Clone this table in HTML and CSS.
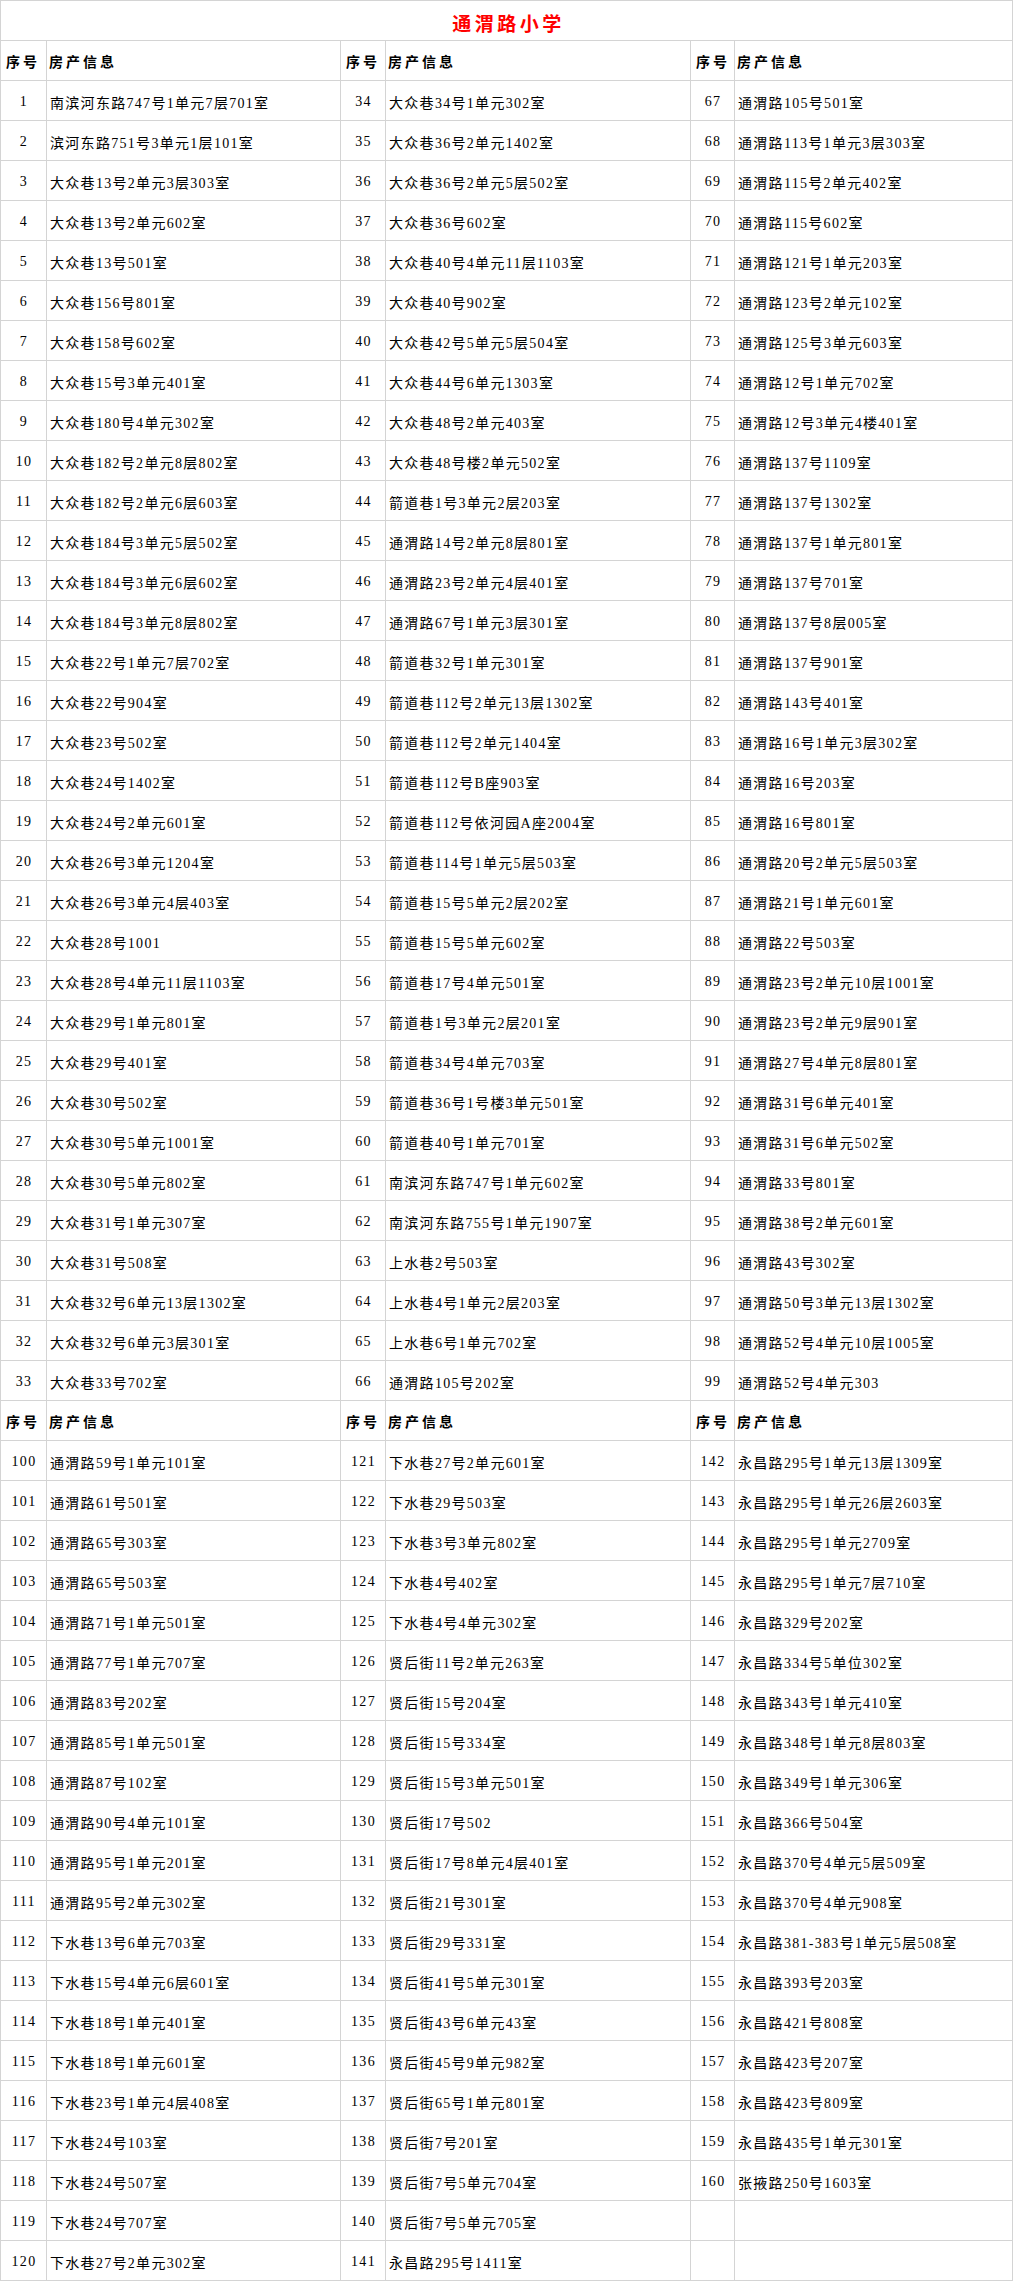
FILE: index.html
```html
<!DOCTYPE html>
<html lang="zh-CN">
<head>
<meta charset="utf-8">
<title>通渭路小学</title>
<link rel="stylesheet" href="styles.css">
</head>
<body>
<div class="sheet">
<div class="title">通渭路小学</div>
<div class="hn">序号</div><div class="ha">房产信息</div><div class="hn">序号</div><div class="ha">房产信息</div><div class="hn">序号</div><div class="ha">房产信息</div>
<div class="n">1</div><div class="a">南滨河东路747号1单元7层701室</div><div class="n">34</div><div class="a">大众巷34号1单元302室</div><div class="n">67</div><div class="a">通渭路105号501室</div>
<div class="n">2</div><div class="a">滨河东路751号3单元1层101室</div><div class="n">35</div><div class="a">大众巷36号2单元1402室</div><div class="n">68</div><div class="a">通渭路113号1单元3层303室</div>
<div class="n">3</div><div class="a">大众巷13号2单元3层303室</div><div class="n">36</div><div class="a">大众巷36号2单元5层502室</div><div class="n">69</div><div class="a">通渭路115号2单元402室</div>
<div class="n">4</div><div class="a">大众巷13号2单元602室</div><div class="n">37</div><div class="a">大众巷36号602室</div><div class="n">70</div><div class="a">通渭路115号602室</div>
<div class="n">5</div><div class="a">大众巷13号501室</div><div class="n">38</div><div class="a">大众巷40号4单元11层1103室</div><div class="n">71</div><div class="a">通渭路121号1单元203室</div>
<div class="n">6</div><div class="a">大众巷156号801室</div><div class="n">39</div><div class="a">大众巷40号902室</div><div class="n">72</div><div class="a">通渭路123号2单元102室</div>
<div class="n">7</div><div class="a">大众巷158号602室</div><div class="n">40</div><div class="a">大众巷42号5单元5层504室</div><div class="n">73</div><div class="a">通渭路125号3单元603室</div>
<div class="n">8</div><div class="a">大众巷15号3单元401室</div><div class="n">41</div><div class="a">大众巷44号6单元1303室</div><div class="n">74</div><div class="a">通渭路12号1单元702室</div>
<div class="n">9</div><div class="a">大众巷180号4单元302室</div><div class="n">42</div><div class="a">大众巷48号2单元403室</div><div class="n">75</div><div class="a">通渭路12号3单元4楼401室</div>
<div class="n">10</div><div class="a">大众巷182号2单元8层802室</div><div class="n">43</div><div class="a">大众巷48号楼2单元502室</div><div class="n">76</div><div class="a">通渭路137号1109室</div>
<div class="n">11</div><div class="a">大众巷182号2单元6层603室</div><div class="n">44</div><div class="a">箭道巷1号3单元2层203室</div><div class="n">77</div><div class="a">通渭路137号1302室</div>
<div class="n">12</div><div class="a">大众巷184号3单元5层502室</div><div class="n">45</div><div class="a">通渭路14号2单元8层801室</div><div class="n">78</div><div class="a">通渭路137号1单元801室</div>
<div class="n">13</div><div class="a">大众巷184号3单元6层602室</div><div class="n">46</div><div class="a">通渭路23号2单元4层401室</div><div class="n">79</div><div class="a">通渭路137号701室</div>
<div class="n">14</div><div class="a">大众巷184号3单元8层802室</div><div class="n">47</div><div class="a">通渭路67号1单元3层301室</div><div class="n">80</div><div class="a">通渭路137号8层005室</div>
<div class="n">15</div><div class="a">大众巷22号1单元7层702室</div><div class="n">48</div><div class="a">箭道巷32号1单元301室</div><div class="n">81</div><div class="a">通渭路137号901室</div>
<div class="n">16</div><div class="a">大众巷22号904室</div><div class="n">49</div><div class="a">箭道巷112号2单元13层1302室</div><div class="n">82</div><div class="a">通渭路143号401室</div>
<div class="n">17</div><div class="a">大众巷23号502室</div><div class="n">50</div><div class="a">箭道巷112号2单元1404室</div><div class="n">83</div><div class="a">通渭路16号1单元3层302室</div>
<div class="n">18</div><div class="a">大众巷24号1402室</div><div class="n">51</div><div class="a">箭道巷112号B座903室</div><div class="n">84</div><div class="a">通渭路16号203室</div>
<div class="n">19</div><div class="a">大众巷24号2单元601室</div><div class="n">52</div><div class="a">箭道巷112号依河园A座2004室</div><div class="n">85</div><div class="a">通渭路16号801室</div>
<div class="n">20</div><div class="a">大众巷26号3单元1204室</div><div class="n">53</div><div class="a">箭道巷114号1单元5层503室</div><div class="n">86</div><div class="a">通渭路20号2单元5层503室</div>
<div class="n">21</div><div class="a">大众巷26号3单元4层403室</div><div class="n">54</div><div class="a">箭道巷15号5单元2层202室</div><div class="n">87</div><div class="a">通渭路21号1单元601室</div>
<div class="n">22</div><div class="a">大众巷28号1001</div><div class="n">55</div><div class="a">箭道巷15号5单元602室</div><div class="n">88</div><div class="a">通渭路22号503室</div>
<div class="n">23</div><div class="a">大众巷28号4单元11层1103室</div><div class="n">56</div><div class="a">箭道巷17号4单元501室</div><div class="n">89</div><div class="a">通渭路23号2单元10层1001室</div>
<div class="n">24</div><div class="a">大众巷29号1单元801室</div><div class="n">57</div><div class="a">箭道巷1号3单元2层201室</div><div class="n">90</div><div class="a">通渭路23号2单元9层901室</div>
<div class="n">25</div><div class="a">大众巷29号401室</div><div class="n">58</div><div class="a">箭道巷34号4单元703室</div><div class="n">91</div><div class="a">通渭路27号4单元8层801室</div>
<div class="n">26</div><div class="a">大众巷30号502室</div><div class="n">59</div><div class="a">箭道巷36号1号楼3单元501室</div><div class="n">92</div><div class="a">通渭路31号6单元401室</div>
<div class="n">27</div><div class="a">大众巷30号5单元1001室</div><div class="n">60</div><div class="a">箭道巷40号1单元701室</div><div class="n">93</div><div class="a">通渭路31号6单元502室</div>
<div class="n">28</div><div class="a">大众巷30号5单元802室</div><div class="n">61</div><div class="a">南滨河东路747号1单元602室</div><div class="n">94</div><div class="a">通渭路33号801室</div>
<div class="n">29</div><div class="a">大众巷31号1单元307室</div><div class="n">62</div><div class="a">南滨河东路755号1单元1907室</div><div class="n">95</div><div class="a">通渭路38号2单元601室</div>
<div class="n">30</div><div class="a">大众巷31号508室</div><div class="n">63</div><div class="a">上水巷2号503室</div><div class="n">96</div><div class="a">通渭路43号302室</div>
<div class="n">31</div><div class="a">大众巷32号6单元13层1302室</div><div class="n">64</div><div class="a">上水巷4号1单元2层203室</div><div class="n">97</div><div class="a">通渭路50号3单元13层1302室</div>
<div class="n">32</div><div class="a">大众巷32号6单元3层301室</div><div class="n">65</div><div class="a">上水巷6号1单元702室</div><div class="n">98</div><div class="a">通渭路52号4单元10层1005室</div>
<div class="n">33</div><div class="a">大众巷33号702室</div><div class="n">66</div><div class="a">通渭路105号202室</div><div class="n">99</div><div class="a">通渭路52号4单元303</div>
<div class="hn">序号</div><div class="ha">房产信息</div><div class="hn">序号</div><div class="ha">房产信息</div><div class="hn">序号</div><div class="ha">房产信息</div>
<div class="n">100</div><div class="a">通渭路59号1单元101室</div><div class="n">121</div><div class="a">下水巷27号2单元601室</div><div class="n">142</div><div class="a">永昌路295号1单元13层1309室</div>
<div class="n">101</div><div class="a">通渭路61号501室</div><div class="n">122</div><div class="a">下水巷29号503室</div><div class="n">143</div><div class="a">永昌路295号1单元26层2603室</div>
<div class="n">102</div><div class="a">通渭路65号303室</div><div class="n">123</div><div class="a">下水巷3号3单元802室</div><div class="n">144</div><div class="a">永昌路295号1单元2709室</div>
<div class="n">103</div><div class="a">通渭路65号503室</div><div class="n">124</div><div class="a">下水巷4号402室</div><div class="n">145</div><div class="a">永昌路295号1单元7层710室</div>
<div class="n">104</div><div class="a">通渭路71号1单元501室</div><div class="n">125</div><div class="a">下水巷4号4单元302室</div><div class="n">146</div><div class="a">永昌路329号202室</div>
<div class="n">105</div><div class="a">通渭路77号1单元707室</div><div class="n">126</div><div class="a">贤后街11号2单元263室</div><div class="n">147</div><div class="a">永昌路334号5单位302室</div>
<div class="n">106</div><div class="a">通渭路83号202室</div><div class="n">127</div><div class="a">贤后街15号204室</div><div class="n">148</div><div class="a">永昌路343号1单元410室</div>
<div class="n">107</div><div class="a">通渭路85号1单元501室</div><div class="n">128</div><div class="a">贤后街15号334室</div><div class="n">149</div><div class="a">永昌路348号1单元8层803室</div>
<div class="n">108</div><div class="a">通渭路87号102室</div><div class="n">129</div><div class="a">贤后街15号3单元501室</div><div class="n">150</div><div class="a">永昌路349号1单元306室</div>
<div class="n">109</div><div class="a">通渭路90号4单元101室</div><div class="n">130</div><div class="a">贤后街17号502</div><div class="n">151</div><div class="a">永昌路366号504室</div>
<div class="n">110</div><div class="a">通渭路95号1单元201室</div><div class="n">131</div><div class="a">贤后街17号8单元4层401室</div><div class="n">152</div><div class="a">永昌路370号4单元5层509室</div>
<div class="n">111</div><div class="a">通渭路95号2单元302室</div><div class="n">132</div><div class="a">贤后街21号301室</div><div class="n">153</div><div class="a">永昌路370号4单元908室</div>
<div class="n">112</div><div class="a">下水巷13号6单元703室</div><div class="n">133</div><div class="a">贤后街29号331室</div><div class="n">154</div><div class="a">永昌路381-383号1单元5层508室</div>
<div class="n">113</div><div class="a">下水巷15号4单元6层601室</div><div class="n">134</div><div class="a">贤后街41号5单元301室</div><div class="n">155</div><div class="a">永昌路393号203室</div>
<div class="n">114</div><div class="a">下水巷18号1单元401室</div><div class="n">135</div><div class="a">贤后街43号6单元43室</div><div class="n">156</div><div class="a">永昌路421号808室</div>
<div class="n">115</div><div class="a">下水巷18号1单元601室</div><div class="n">136</div><div class="a">贤后街45号9单元982室</div><div class="n">157</div><div class="a">永昌路423号207室</div>
<div class="n">116</div><div class="a">下水巷23号1单元4层408室</div><div class="n">137</div><div class="a">贤后街65号1单元801室</div><div class="n">158</div><div class="a">永昌路423号809室</div>
<div class="n">117</div><div class="a">下水巷24号103室</div><div class="n">138</div><div class="a">贤后街7号201室</div><div class="n">159</div><div class="a">永昌路435号1单元301室</div>
<div class="n">118</div><div class="a">下水巷24号507室</div><div class="n">139</div><div class="a">贤后街7号5单元704室</div><div class="n">160</div><div class="a">张掖路250号1603室</div>
<div class="n">119</div><div class="a">下水巷24号707室</div><div class="n">140</div><div class="a">贤后街7号5单元705室</div><div class="n"></div><div class="a"></div>
<div class="n">120</div><div class="a">下水巷27号2单元302室</div><div class="n">141</div><div class="a">永昌路295号1411室</div><div class="n"></div><div class="a"></div>
</div>
</body>
</html>
```

FILE: styles.css
```css
html, body {
  margin: 0;
  padding: 0;
  background: #ffffff;
}

.sheet {
  width: 1013px;
  box-sizing: border-box;
  display: grid;
  grid-template-columns: 45px 293px 44px 304px 43px 277px;
  grid-auto-rows: 39px;
  gap: 1px;
  padding: 1px;
  background: #d4d4d4;
  font-family: "Liberation Serif", "Noto Sans CJK SC", serif;
  font-size: 14px;
  color: #000000;
}

.sheet > div {
  background: #ffffff;
  display: flex;
  align-items: center;
  white-space: nowrap;
  overflow: hidden;
}

.title {
  grid-column: 1 / -1;
  justify-content: center;
  color: #ff0000;
  font-family: "Noto Sans CJK SC", sans-serif;
  font-weight: 700;
  font-size: 19px;
  letter-spacing: 3.5px;
  padding-left: 4px;
  padding-top: 4px;
  box-sizing: border-box;
}

.hn,
.ha {
  font-family: "Noto Sans CJK SC", sans-serif;
  font-weight: 700;
  font-size: 14px;
  letter-spacing: 3px;
}

.hn {
  padding-left: 5px;
}

.ha {
  padding-left: 2px;
}

.n {
  justify-content: center;
  letter-spacing: 1.3px;
  padding-left: 1px;
  padding-top: 2px;
  box-sizing: border-box;
}

.a {
  padding-left: 3px;
  padding-top: 2px;
  letter-spacing: 1.3px;
  box-sizing: border-box;
}
```
